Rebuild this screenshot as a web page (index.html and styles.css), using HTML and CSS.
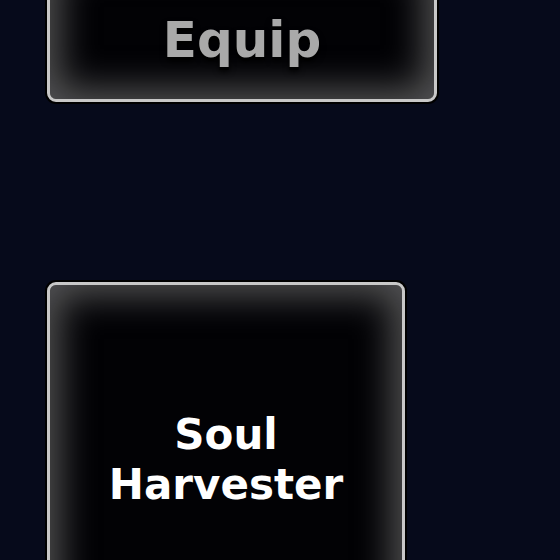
FILE: index.html
```html
<!DOCTYPE html>
<html>
<head>
<meta charset="utf-8">
<link rel="stylesheet" href="styles.css">
</head>
<body>
<div class="page">
  <button class="btn btn-equip"><span class="label equip">Equip</span></button>
  <button class="btn btn-item"><span class="label item">Soul<br>Harvester</span></button>
</div>
</body>
</html>
```
FILE: styles.css
```css
html, body {
  margin: 0;
  padding: 0;
  background: #060a1b;
  width: 560px;
  height: 560px;
  overflow: hidden;
}
.page {
  display: flex;
  flex-direction: column;
  align-items: flex-start;
  gap: 180px;
  padding-left: 47px;
  margin-top: -50px;
}
.btn {
  box-sizing: border-box;
  border: 3px solid #c8c8c8;
  border-radius: 9px;
  background: #020205;
  box-shadow: 0 0 0 2px #000, inset 0 0 36px 10px rgba(120,120,120,0.7);
  display: flex;
  align-items: center;
  justify-content: center;
  padding: 0;
  font-family: "DejaVu Sans", sans-serif;
  font-weight: bold;
}
.btn-equip {
  width: 390px;
  height: 152px;
  padding-top: 28px;
}
.btn-item {
  width: 358px;
  height: 400px;
  padding-bottom: 44px;
}
.equip {
  color: #a9a9a9;
  font-size: 50px;
  text-shadow: 0 3px 0 #000, 0 4px 6px #000;
}
.item {
  color: #ffffff;
  font-size: 42px;
  line-height: 50px;
  text-align: center;
}
```
